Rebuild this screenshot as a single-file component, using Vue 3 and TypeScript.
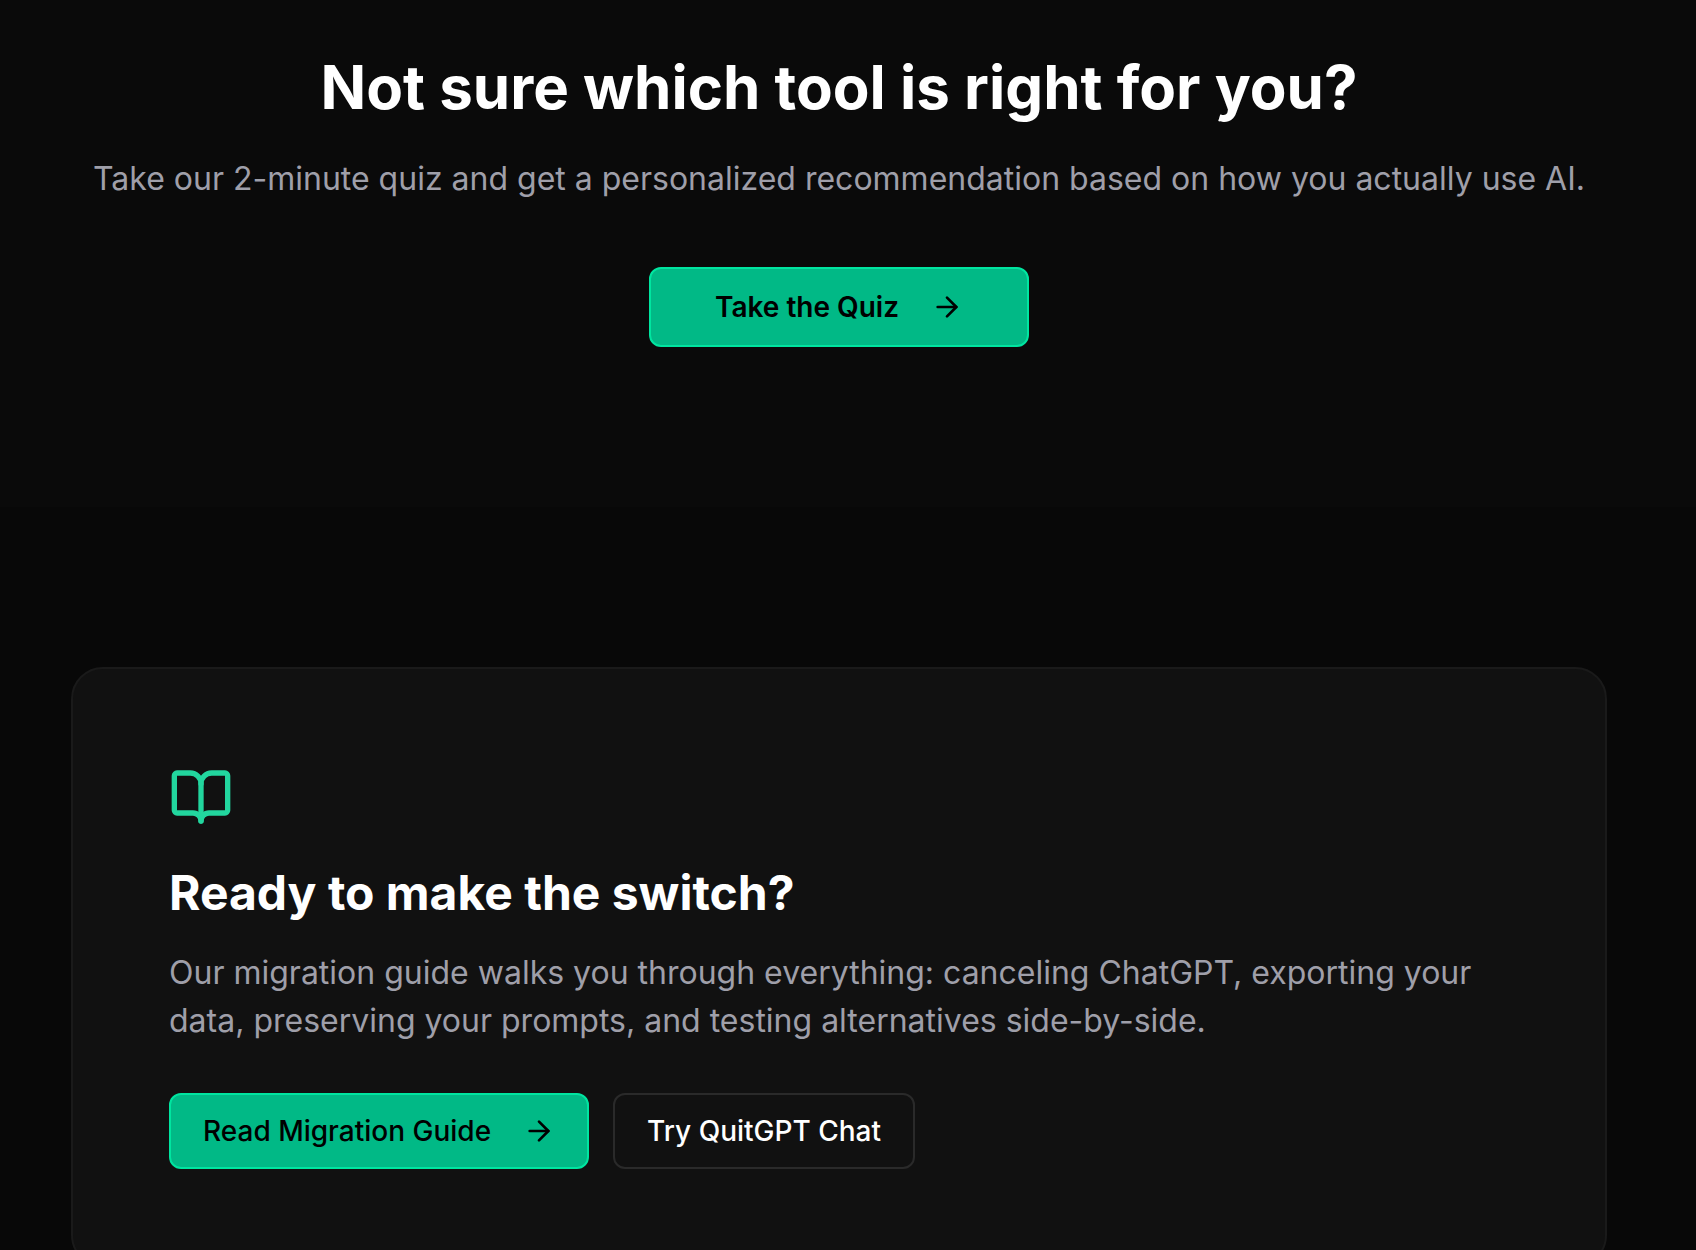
<script setup lang="ts">
const quizHref: string = '#quiz'
const guideHref: string = '#migration-guide'
const chatHref: string = '#chat'
</script>

<template>
  <main class="page">
    <section class="quiz">
      <h2 class="quiz-title">Not sure which tool is right for you?</h2>
      <p class="copy">Take our 2-minute quiz and get a personalized recommendation based on how you actually use AI.</p>
      <a class="button primary large" :href="quizHref">
        Take the Quiz
        <svg class="arrow" viewBox="0 0 24 24" aria-hidden="true"><path d="M5 12h14" /><path d="m12 5 7 7-7 7" /></svg>
      </a>
    </section>

    <section class="switch">
      <article class="card">
        <svg class="book" viewBox="0 0 24 24" aria-hidden="true">
          <path d="M12 7v14" />
          <path d="M3 18a1 1 0 0 1-1-1V4a1 1 0 0 1 1-1h5a4 4 0 0 1 4 4 4 4 0 0 1 4-4h5a1 1 0 0 1 1 1v13a1 1 0 0 1-1 1h-6a3 3 0 0 0-3 3 3 3 0 0 0-3-3z" />
        </svg>
        <h3 class="card-title">Ready to make the switch?</h3>
        <p class="copy">Our migration guide walks you through everything: canceling ChatGPT, exporting your data, preserving your prompts, and testing alternatives side-by-side.</p>
        <div class="actions">
          <a class="button primary" :href="guideHref">
            Read Migration Guide
            <svg class="arrow" viewBox="0 0 24 24" aria-hidden="true"><path d="M5 12h14" /><path d="m12 5 7 7-7 7" /></svg>
          </a>
          <a class="button outline" :href="chatHref">Try QuitGPT Chat</a>
        </div>
      </article>
    </section>
  </main>
</template>

<style>
body {
  margin: 0;
  background: #080808;
}
</style>

<style scoped>
.page {
  height: 100vh;
  overflow: hidden;
  font-family: Inter, "Liberation Sans", sans-serif;
  color: #fff;
}

.quiz,
.switch {
  box-sizing: border-box;
  display: flex;
  flex-direction: column;
  align-items: center;
}

.quiz {
  padding: 51px 18px 160px 0;
  background: #0a0a0a;
  text-align: center;
}

.switch {
  padding: 160px 18px 160px 0;
  background: #080808;
}

.quiz-title,
.card-title,
.copy {
  margin: 0;
}

.quiz-title {
  margin-bottom: 32px;
  font-size: 60px;
  line-height: 72px;
  font-weight: 700;
}

.copy {
  font-size: 32px;
  line-height: 48px;
  color: #9f9fa9;
}

.card {
  box-sizing: border-box;
  width: 100%;
  max-width: 1536px;
  padding: 96px;
  border: 2px solid #1a1a1a;
  border-radius: 32px;
  background: #111;
}

.card-title {
  margin: 32px 0 24px;
  font-size: 48px;
  line-height: 64px;
  font-weight: 700;
}

.actions {
  display: flex;
  flex-wrap: wrap;
  gap: 24px;
  margin-top: 48px;
}

.button {
  box-sizing: border-box;
  display: inline-flex;
  align-items: center;
  gap: 32px;
  height: 76px;
  padding: 0 32px;
  border: 2px solid;
  border-radius: 12px;
  font-size: 28px;
  line-height: 40px;
  font-weight: 500;
  text-decoration: none;
  white-space: nowrap;
}

.large {
  height: 80px;
  margin-top: 64px;
  padding: 0 64px;
  font-weight: 600;
}

.primary {
  border-color: #00e5a0;
  background: #01b986;
  color: #000;
}

.outline {
  border-color: #2a2a2a;
  color: #fff;
}

.arrow,
.book {
  display: block;
  fill: none;
  stroke: currentColor;
  stroke-width: 2;
  stroke-linecap: round;
  stroke-linejoin: round;
}

.arrow {
  width: 32px;
  height: 32px;
}

.book {
  width: 64px;
  height: 64px;
  color: #22d69e;
}
</style>
